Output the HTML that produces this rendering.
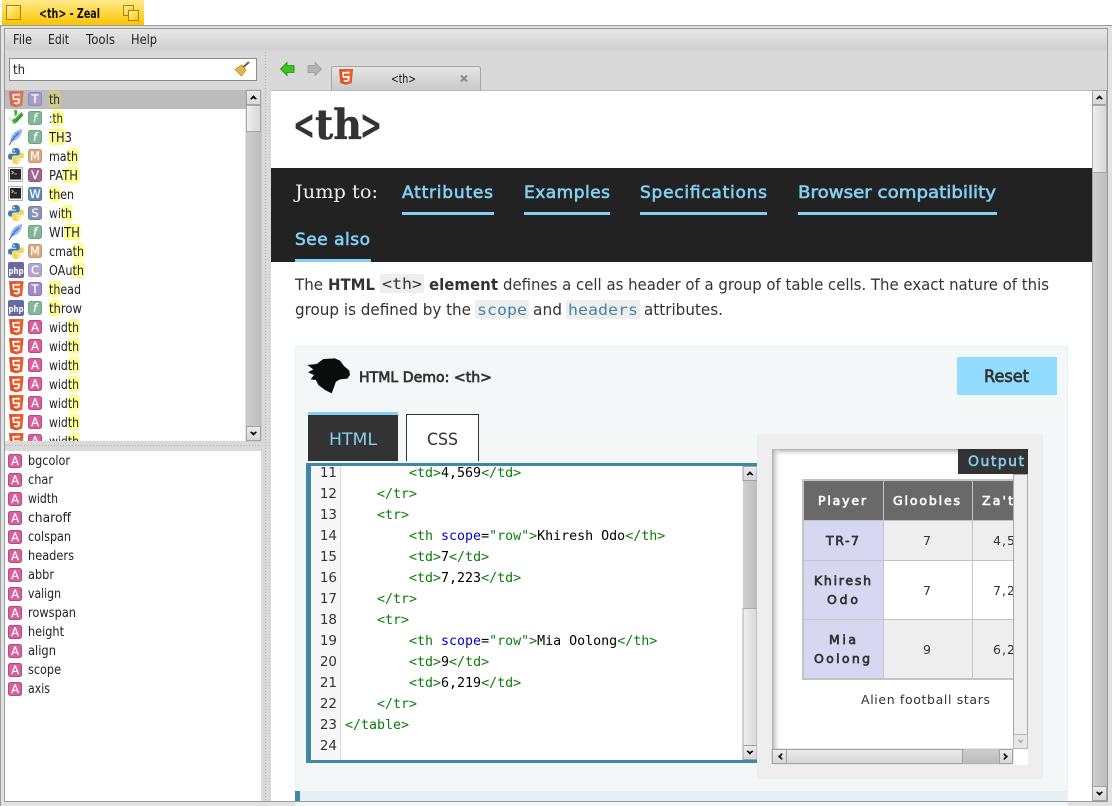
<!DOCTYPE html>
<html lang="en"><head><meta charset="utf-8"><title>&lt;th&gt; - Zeal</title>
<style>
html,body{margin:0;padding:0;background:#fff;overflow:hidden}
svg{display:block;font-family:"DejaVu Sans",sans-serif}
.ui{font-size:13.3px;fill:#222}
.b{font-size:15.6px;fill:#333}
.m{font-family:"DejaVu Sans Mono",monospace;font-size:13.3px;fill:#000;white-space:pre}
.g{fill:#0a7d0a}.u{fill:#0000d0}
.n{font-size:13.5px;fill:#333;text-anchor:end}
.l{font-size:17px;fill:#83d0f2;stroke:#83d0f2;stroke-width:.6px}
.t{font-size:12.5px;fill:#333}
.tb{font-size:12.5px;fill:#333;stroke:#333;stroke-width:.7px}
.tw{font-size:12.5px;fill:#fff;stroke:#fff;stroke-width:.6px}
.bd{font-size:11.5px;fill:#fff;text-anchor:middle;stroke:#fff;stroke-width:.15px}
.h1{font-family:"DejaVu Serif",serif;font-weight:bold;font-size:41px;fill:#333;stroke:#333;stroke-width:.4px}
</style></head><body>
<svg width="1112" height="806" viewBox="0 0 1112 806" xmlns="http://www.w3.org/2000/svg">
<defs>
<linearGradient id="ty" x1="0" y1="0" x2="0" y2="1"><stop offset="0" stop-color="#ffea8c"/><stop offset="1" stop-color="#fcc400"/></linearGradient>
<linearGradient id="tbox" x1="0" y1="0" x2="1" y2="1"><stop offset="0" stop-color="#fff3b0"/><stop offset="1" stop-color="#fcc400"/></linearGradient>
<linearGradient id="mn" x1="0" y1="0" x2="0" y2="1"><stop offset="0" stop-color="#e8e8e8"/><stop offset="1" stop-color="#cfcfcf"/></linearGradient>
<linearGradient id="tabg" x1="0" y1="0" x2="0" y2="1"><stop offset="0" stop-color="#e6e6e6"/><stop offset="1" stop-color="#c9c9c9"/></linearGradient>
<linearGradient id="th" x1="0" y1="0" x2="1" y2="0"><stop offset="0" stop-color="#f0f0f0"/><stop offset="1" stop-color="#d6d6d6"/></linearGradient>
<linearGradient id="tr" x1="0" y1="0" x2="1" y2="0"><stop offset="0" stop-color="#cfcfcf"/><stop offset="1" stop-color="#bdbdbd"/></linearGradient>
<linearGradient id="thh" x1="0" y1="0" x2="0" y2="1"><stop offset="0" stop-color="#ececec"/><stop offset="1" stop-color="#d6d6d6"/></linearGradient>
<linearGradient id="trh" x1="0" y1="0" x2="0" y2="1"><stop offset="0" stop-color="#cfcfcf"/><stop offset="1" stop-color="#b9b9b9"/></linearGradient>
<linearGradient id="shL" x1="0" y1="0" x2="1" y2="0"><stop offset="0" stop-color="#aaa"/><stop offset="1" stop-color="#fff" stop-opacity="0"/></linearGradient>
<linearGradient id="shT" x1="0" y1="0" x2="0" y2="1"><stop offset="0" stop-color="#aaa"/><stop offset="1" stop-color="#fff" stop-opacity="0"/></linearGradient>
<symbol id="h5" viewBox="0 0 16 18" overflow="visible">
<path d="M0 0H16L14.5 16 8 18 1.5 16Z" fill="#e44d26"/><path d="M8 1.3H14.6L13.4 15.2 8 16.7Z" fill="#f16529"/>
<path d="M12 4H4.6L5.1 9H11.2L10.7 12.9 8 13.8 5.4 12.9" fill="none" stroke="#fff" stroke-width="1.9"/>
</symbol>
<symbol id="py" viewBox="0 0 16 16" overflow="visible">
<path d="M8 0C4.5 0 4.2 1.5 4.2 3V4.8H8.2V5.6H2.5C1 5.6 0 6.8 0 8.6 0 10.4 1 11.6 2.5 11.6H4V9.6C4 8.4 5 7.6 6.2 7.6H10C11 7.6 11.8 6.8 11.8 5.8V3C11.8 1.2 10.2 0 8 0Z" fill="#3d7ab0"/>
<path d="M8 16C11.5 16 11.8 14.5 11.8 13V11.2H7.8V10.4H13.5C15 10.4 16 9.2 16 7.4 16 5.6 15 4.4 13.5 4.4H12V6.4C12 7.6 11 8.4 9.8 8.4H6C5 8.4 4.2 9.2 4.2 10.2V13C4.2 14.8 5.8 16 8 16Z" fill="#fbd34e"/>
<circle cx="6" cy="2.5" r=".9" fill="#fff"/><circle cx="10" cy="13.5" r=".9" fill="#fff"/>
</symbol>
<symbol id="tm" viewBox="0 0 16 16" overflow="visible">
<rect x=".5" y=".5" width="14" height="14" fill="#f2f2f2" stroke="#b5b5b5"/>
<rect x="2" y="2" width="11" height="10.5" fill="#252525"/>
<path d="M3.5 4L5.5 5.5 3.5 7M6 7H9" fill="none" stroke="#ddd" stroke-width=".8"/>
</symbol>
<symbol id="fe" viewBox="0 0 16 16" overflow="visible">
<path d="M14 0C8 1 3 6 2.2 12 4 13 9 11.5 12 7 13.8 4.5 14.4 2 14 0Z" fill="#8fbcf2"/>
<path d="M11 3.5C8 6 5 9.500 1.200 16" fill="none" stroke="#3a52c8" stroke-width="1"/>
<path d="M4.500 6.500L7 9M7 3.500L10 7" fill="none" stroke="#5a86dc" stroke-width=".7"/>
</symbol>
<symbol id="vm" viewBox="0 0 16 16" overflow="visible">
<path d="M1 6L5 10 3.500 12 .5 9Z" fill="#dfe8dc"/>
<path d="M6 0L9 0 9 6 13.500 2 15.500 5 8 13 5.500 14 4 10 7 8Z" fill="#4fae3e"/>
<path d="M6 7L12 2 11.500 4 7 8.500Z" fill="#ececec"/>
<path d="M7 10L14.500 4 15 5.500 8 13Z" fill="#2f9a2a"/>
</symbol>
<symbol id="up" viewBox="0 0 15 15" overflow="visible"><rect x=".5" y=".5" width="14" height="14" fill="url(#thh)" stroke="#a2a2a2"/><path d="M4 9L7.500 5.200 11 9 9.500 9.500 7.500 8 5.500 9.500Z" fill="#000"/></symbol>
<symbol id="dn" viewBox="0 0 15 15" overflow="visible"><rect x=".5" y=".5" width="14" height="14" fill="url(#thh)" stroke="#a2a2a2"/><path d="M4 6L7.500 9.800 11 6 9.500 5.500 7.500 7 5.500 5.500Z" fill="#000"/></symbol>
<symbol id="bA" viewBox="0 0 14 14" overflow="visible"><rect x=".5" y=".5" width="13" height="13" rx="2" fill="#d95f9e" stroke="#b84a83"/></symbol>
<clipPath id="tc"><rect x="772" y="449" width="241" height="300"/></clipPath>
<clipPath id="lc"><rect x="5" y="90" width="241" height="351"/></clipPath>
</defs>

<!-- window chrome -->
<rect x="0" y="25" width="1112" height="781" fill="#e2e2e2"/>
<path d="M0 25.500H1112M.5 25V806" stroke="#9a9a9a" fill="none"/>
<rect x="4.500" y="28.500" width="1103" height="773" fill="#d9d9d9" stroke="#9a9a9a"/>
<rect x="5" y="29" width="1102" height="21" fill="url(#mn)"/>

<!-- title tab -->
<rect x="2" y="0" width="142" height="25" fill="url(#ty)"/>
<rect x="6.500" y="5.500" width="14" height="14" fill="url(#tbox)" stroke="#a88600"/>
<rect x="123.500" y="5.500" width="10" height="10" fill="url(#tbox)" stroke="#a88600"/>
<rect x="128.500" y="10.500" width="10" height="10" fill="url(#tbox)" stroke="#a88600"/>
<text x="39" y="18" font-size="13" font-weight="bold" fill="#111" textLength="61" lengthAdjust="spacingAndGlyphs">&lt;th&gt; - Zeal</text>

<!-- menu -->
<text class="ui" x="13" y="44" textLength="19" lengthAdjust="spacingAndGlyphs">File</text>
<text class="ui" x="48" y="44" textLength="21" lengthAdjust="spacingAndGlyphs">Edit</text>
<text class="ui" x="86" y="44" textLength="29" lengthAdjust="spacingAndGlyphs">Tools</text>
<text class="ui" x="131" y="44" textLength="26" lengthAdjust="spacingAndGlyphs">Help</text>

<!-- search -->
<rect x="9.500" y="58.500" width="247" height="22" fill="#fff" stroke="#8c8c8c"/>
<text class="ui" x="13" y="74" textLength="12" lengthAdjust="spacingAndGlyphs" fill="#222">th</text>
<path d="M235 69.500L241.500 65 246 70 241.500 76Z" fill="#eab545" stroke="#a87a20" stroke-width=".6"/>
<path d="M243.500 67L249 62" stroke="#8a5a24" stroke-width="2"/>

<!-- splitter dots -->
<path d="M265.500 52V801" stroke="#aaa" stroke-dasharray="1 2" fill="none"/>
<path d="M6 445.500H260" stroke="#aaa" stroke-dasharray="1 2" fill="none"/>

<!-- results list -->
<rect x="5" y="90" width="241" height="351" fill="#fff"/>
<rect x="5" y="90" width="241" height="19" fill="#bcbcbc"/>
<g clip-path="url(#lc)">
<g fill="#ffff9e" stroke="#ffff66">
<rect x="49.500" y="91.500" width="10.500" height="15" rx="3" fill="#c9c998" stroke="#dcdc50"/>
<rect x="52.500" y="110.500" width="10.500" height="15" rx="3"/>
<rect x="49.500" y="129.500" width="15.500" height="15" rx="3"/>
<rect x="67.500" y="148.500" width="10.500" height="15" rx="3"/>
<rect x="63.500" y="167.500" width="15.500" height="15" rx="3"/>
<rect x="49.500" y="186.500" width="10.500" height="15" rx="3"/>
<rect x="61.500" y="205.500" width="10.500" height="15" rx="3"/>
<rect x="64.500" y="224.500" width="15.500" height="15" rx="3"/>
<rect x="73.500" y="243.500" width="10.500" height="15" rx="3"/>
<rect x="73.500" y="262.500" width="10.500" height="15" rx="3"/>
<rect x="49.500" y="281.500" width="10.500" height="15" rx="3"/>
<rect x="49.500" y="300.500" width="10.500" height="15" rx="3"/>
<rect x="68.500" y="319.500" width="10.500" height="15" rx="3"/>
<rect x="68.500" y="338.500" width="10.500" height="15" rx="3"/>
<rect x="68.500" y="357.500" width="10.500" height="15" rx="3"/>
<rect x="68.500" y="376.500" width="10.500" height="15" rx="3"/>
<rect x="68.500" y="395.500" width="10.500" height="15" rx="3"/>
<rect x="68.500" y="414.500" width="10.500" height="15" rx="3"/>
<rect x="68.500" y="433.500" width="10.500" height="15" rx="3"/>
</g>
<g opacity=".72"><use href="#h5" x="9" y="91" width="14.500" height="16.500"/></g>
<use href="#vm" x="8" y="110" width="16" height="16"/>
<use href="#fe" x="8" y="129" width="16" height="16"/>
<use href="#py" x="8" y="148" width="16" height="16"/>
<use href="#tm" x="8" y="167" width="16" height="16"/>
<use href="#tm" x="8" y="186" width="16" height="16"/>
<use href="#py" x="8" y="205" width="16" height="16"/>
<use href="#fe" x="8" y="224" width="16" height="16"/>
<use href="#py" x="8" y="243" width="16" height="16"/>
<rect x="8" y="262" width="16" height="16" rx="2" fill="#6a699f"/><text x="8.500" y="274" font-size="9" font-weight="bold" fill="#fff" textLength="15" lengthAdjust="spacingAndGlyphs">php</text>
<use href="#h5" x="9" y="281" width="14.500" height="16.500"/>
<rect x="8" y="300" width="16" height="16" rx="2" fill="#6a699f"/><text x="8.500" y="312" font-size="9" font-weight="bold" fill="#fff" textLength="15" lengthAdjust="spacingAndGlyphs">php</text>
<use href="#h5" x="9" y="319" width="14.500" height="16.500"/>
<use href="#h5" x="9" y="338" width="14.500" height="16.500"/>
<use href="#h5" x="9" y="357" width="14.500" height="16.500"/>
<use href="#h5" x="9" y="376" width="14.500" height="16.500"/>
<use href="#h5" x="9" y="395" width="14.500" height="16.500"/>
<use href="#h5" x="9" y="414" width="14.500" height="16.500"/>
<use href="#h5" x="9" y="433" width="14.500" height="16.500"/>

<rect x="28.500" y="92.500" width="13" height="13" rx="2" fill="#a99ccb" stroke="#9485bd"/><text class="bd" x="35" y="103">T</text>
<rect x="28.500" y="111.500" width="13" height="13" rx="2" fill="#83b79c" stroke="#6fa488"/><text class="bd" x="35" y="122" font-style="italic">f</text>
<rect x="28.500" y="130.500" width="13" height="13" rx="2" fill="#83b79c" stroke="#6fa488"/><text class="bd" x="35" y="141" font-style="italic">f</text>
<rect x="28.500" y="149.500" width="13" height="13" rx="2" fill="#dba97f" stroke="#c9966b"/><text class="bd" x="35" y="160">M</text>
<rect x="28.500" y="168.500" width="13" height="13" rx="2" fill="#a46690" stroke="#8f5379"/><text class="bd" x="35" y="179">V</text>
<rect x="28.500" y="187.500" width="13" height="13" rx="2" fill="#6388bf" stroke="#5073a9"/><text class="bd" x="35" y="198">W</text>
<rect x="28.500" y="206.500" width="13" height="13" rx="2" fill="#8893b8" stroke="#7580a6"/><text class="bd" x="35" y="217">S</text>
<rect x="28.500" y="225.500" width="13" height="13" rx="2" fill="#83b79c" stroke="#6fa488"/><text class="bd" x="35" y="236" font-style="italic">f</text>
<rect x="28.500" y="244.500" width="13" height="13" rx="2" fill="#dba97f" stroke="#c9966b"/><text class="bd" x="35" y="255">M</text>
<rect x="28.500" y="263.500" width="13" height="13" rx="2" fill="#b5a6d0" stroke="#a292bf"/><text class="bd" x="35" y="274">C</text>
<rect x="28.500" y="282.500" width="13" height="13" rx="2" fill="#9d8cc5" stroke="#8a78b4"/><text class="bd" x="35" y="293">T</text>
<rect x="28.500" y="301.500" width="13" height="13" rx="2" fill="#83b79c" stroke="#6fa488"/><text class="bd" x="35" y="312" font-style="italic">f</text>
<use href="#bA" x="28" y="320" width="14" height="14"/><text class="bd" x="35" y="331">A</text>
<use href="#bA" x="28" y="339" width="14" height="14"/><text class="bd" x="35" y="350">A</text>
<use href="#bA" x="28" y="358" width="14" height="14"/><text class="bd" x="35" y="369">A</text>
<use href="#bA" x="28" y="377" width="14" height="14"/><text class="bd" x="35" y="388">A</text>
<use href="#bA" x="28" y="396" width="14" height="14"/><text class="bd" x="35" y="407">A</text>
<use href="#bA" x="28" y="415" width="14" height="14"/><text class="bd" x="35" y="426">A</text>
<use href="#bA" x="28" y="434" width="14" height="14"/><text class="bd" x="35" y="445">A</text>

<text class="ui" x="49" y="104" textLength="11" lengthAdjust="spacingAndGlyphs">th</text>
<text class="ui" x="49" y="123" textLength="14" lengthAdjust="spacingAndGlyphs">:th</text>
<text class="ui" x="49" y="142" textLength="23" lengthAdjust="spacingAndGlyphs">TH3</text>
<text class="ui" x="49" y="161" textLength="29" lengthAdjust="spacingAndGlyphs">math</text>
<text class="ui" x="49" y="180" textLength="29" lengthAdjust="spacingAndGlyphs">PATH</text>
<text class="ui" x="49" y="199" textLength="25" lengthAdjust="spacingAndGlyphs">then</text>
<text class="ui" x="49" y="218" textLength="23" lengthAdjust="spacingAndGlyphs">with</text>
<text class="ui" x="49" y="237" textLength="31" lengthAdjust="spacingAndGlyphs">WITH</text>
<text class="ui" x="49" y="256" textLength="35" lengthAdjust="spacingAndGlyphs">cmath</text>
<text class="ui" x="49" y="275" textLength="35" lengthAdjust="spacingAndGlyphs">OAuth</text>
<text class="ui" x="49" y="294" textLength="32" lengthAdjust="spacingAndGlyphs">thead</text>
<text class="ui" x="49" y="313" textLength="33" lengthAdjust="spacingAndGlyphs">throw</text>
<text class="ui" x="49" y="332" textLength="30" lengthAdjust="spacingAndGlyphs">width</text>
<text class="ui" x="49" y="351" textLength="30" lengthAdjust="spacingAndGlyphs">width</text>
<text class="ui" x="49" y="370" textLength="30" lengthAdjust="spacingAndGlyphs">width</text>
<text class="ui" x="49" y="389" textLength="30" lengthAdjust="spacingAndGlyphs">width</text>
<text class="ui" x="49" y="408" textLength="30" lengthAdjust="spacingAndGlyphs">width</text>
<text class="ui" x="49" y="427" textLength="30" lengthAdjust="spacingAndGlyphs">width</text>
<text class="ui" x="49" y="446" textLength="30" lengthAdjust="spacingAndGlyphs">width</text>
</g>
<!-- list scrollbar -->
<rect x="246" y="90" width="15" height="351" fill="url(#tr)" stroke="#a2a2a2" stroke-width=".5"/>
<use href="#up" x="246" y="90" width="15" height="15"/>
<rect x="246.500" y="105.500" width="14" height="26" fill="url(#th)" stroke="#a8a8a8"/>
<use href="#dn" x="246" y="426" width="15" height="15"/>

<!-- members list -->
<rect x="5" y="451" width="256" height="350" fill="#fff"/>
<use href="#bA" x="8" y="454" width="14" height="14"/><text class="bd" x="15" y="465">A</text><text class="ui" x="28" y="465" textLength="42" lengthAdjust="spacingAndGlyphs">bgcolor</text>
<use href="#bA" x="8" y="473" width="14" height="14"/><text class="bd" x="15" y="484">A</text><text class="ui" x="28" y="484" textLength="25" lengthAdjust="spacingAndGlyphs">char</text>
<use href="#bA" x="8" y="492" width="14" height="14"/><text class="bd" x="15" y="503">A</text><text class="ui" x="28" y="503" textLength="30" lengthAdjust="spacingAndGlyphs">width</text>
<use href="#bA" x="8" y="511" width="14" height="14"/><text class="bd" x="15" y="522">A</text><text class="ui" x="28" y="522" textLength="43" lengthAdjust="spacingAndGlyphs">charoff</text>
<use href="#bA" x="8" y="530" width="14" height="14"/><text class="bd" x="15" y="541">A</text><text class="ui" x="28" y="541" textLength="43" lengthAdjust="spacingAndGlyphs">colspan</text>
<use href="#bA" x="8" y="549" width="14" height="14"/><text class="bd" x="15" y="560">A</text><text class="ui" x="28" y="560" textLength="46" lengthAdjust="spacingAndGlyphs">headers</text>
<use href="#bA" x="8" y="568" width="14" height="14"/><text class="bd" x="15" y="579">A</text><text class="ui" x="28" y="579" textLength="26" lengthAdjust="spacingAndGlyphs">abbr</text>
<use href="#bA" x="8" y="587" width="14" height="14"/><text class="bd" x="15" y="598">A</text><text class="ui" x="28" y="598" textLength="33" lengthAdjust="spacingAndGlyphs">valign</text>
<use href="#bA" x="8" y="606" width="14" height="14"/><text class="bd" x="15" y="617">A</text><text class="ui" x="28" y="617" textLength="48" lengthAdjust="spacingAndGlyphs">rowspan</text>
<use href="#bA" x="8" y="625" width="14" height="14"/><text class="bd" x="15" y="636">A</text><text class="ui" x="28" y="636" textLength="36" lengthAdjust="spacingAndGlyphs">height</text>
<use href="#bA" x="8" y="644" width="14" height="14"/><text class="bd" x="15" y="655">A</text><text class="ui" x="28" y="655" textLength="28" lengthAdjust="spacingAndGlyphs">align</text>
<use href="#bA" x="8" y="663" width="14" height="14"/><text class="bd" x="15" y="674">A</text><text class="ui" x="28" y="674" textLength="33" lengthAdjust="spacingAndGlyphs">scope</text>
<use href="#bA" x="8" y="682" width="14" height="14"/><text class="bd" x="15" y="693">A</text><text class="ui" x="28" y="693" textLength="22" lengthAdjust="spacingAndGlyphs">axis</text>

<!-- nav arrows and tab -->
<path d="M280.500 69L287 62.500V65.500H294V72.500H287V75.500Z" fill="#3fc41f" stroke="#1f8a10" stroke-width=".8"/>
<path d="M321.500 69L315 62.500V65.500H308V72.500H315V75.500Z" fill="#b4b4b4" stroke="#999" stroke-width=".8"/>
<path d="M331.500 90V69Q331.500 66.500 334 66.500H478Q480.500 66.500 480.500 69V90" fill="url(#tabg)" stroke="#a5a5a5"/>
<use href="#h5" x="339" y="69" width="14" height="16"/>
<text x="391" y="83" font-size="12.500" fill="#111" textLength="25" lengthAdjust="spacingAndGlyphs">&lt;th&gt;</text>
<path d="M461 75.500L467 81.500M467 75.500L461 81.500" stroke="#8a8a8a" stroke-width="2"/>

<!-- main content -->
<rect x="271" y="90" width="821" height="711" fill="#fff"/>
<path d="M271 90.500H1092" stroke="#bbb"/>
<text class="h1" x="293" y="139" textLength="22" lengthAdjust="spacingAndGlyphs">&lt;</text>
<text class="h1" x="315" y="139" textLength="47" lengthAdjust="spacingAndGlyphs">th</text>
<text class="h1" x="360" y="139" textLength="22" lengthAdjust="spacingAndGlyphs">&gt;</text>

<rect x="271" y="168" width="821" height="94" fill="#222"/>
<text x="295" y="198" font-family="'DejaVu Serif',serif" font-size="19" fill="#eee" textLength="83" lengthAdjust="spacingAndGlyphs">Jump to:</text>
<text class="l" x="402" y="198" textLength="91" lengthAdjust="spacing">Attributes</text><rect x="402" y="212" width="92" height="3" fill="#83d0f2"/>
<text class="l" x="524" y="198" textLength="86" lengthAdjust="spacing">Examples</text><rect x="524" y="212" width="86" height="3" fill="#83d0f2"/>
<text class="l" x="640" y="198" textLength="127" lengthAdjust="spacing">Specifications</text><rect x="640" y="212" width="127" height="3" fill="#83d0f2"/>
<text class="l" x="798" y="198" textLength="198" lengthAdjust="spacingAndGlyphs">Browser compatibility</text><rect x="798" y="212" width="199" height="3" fill="#83d0f2"/>
<text class="l" x="295" y="245" textLength="75" lengthAdjust="spacing">See also</text><rect x="295" y="259" width="76" height="3" fill="#83d0f2"/>

<!-- intro -->
<text class="b" x="295" y="290" textLength="28" lengthAdjust="spacingAndGlyphs">The</text>
<text class="b" x="328" y="290" font-weight="bold" textLength="47" lengthAdjust="spacingAndGlyphs">HTML</text>
<rect x="380" y="274" width="44" height="19" rx="2" fill="#eee"/>
<text x="382" y="289" font-family="'DejaVu Sans Mono',monospace" font-size="15.500" fill="#333" textLength="40" lengthAdjust="spacingAndGlyphs">&lt;th&gt;</text>
<text class="b" x="429" y="290" font-weight="bold" textLength="69" lengthAdjust="spacingAndGlyphs">element</text>
<text class="b" x="503" y="290" textLength="546" lengthAdjust="spacingAndGlyphs">defines a cell as header of a group of table cells. The exact nature of this</text>
<text class="b" x="295" y="315" textLength="176" lengthAdjust="spacingAndGlyphs">group is defined by the</text>
<rect x="475" y="300" width="54" height="19" rx="2" fill="#eee"/>
<text x="477" y="315" font-family="'DejaVu Sans Mono',monospace" font-size="15.500" fill="#3f87a6" textLength="50" lengthAdjust="spacingAndGlyphs">scope</text>
<text class="b" x="533" y="315" textLength="29" lengthAdjust="spacingAndGlyphs">and</text>
<rect x="566" y="300" width="74" height="19" rx="2" fill="#eee"/>
<text x="568" y="315" font-family="'DejaVu Sans Mono',monospace" font-size="15.500" fill="#3f87a6" textLength="70" lengthAdjust="spacingAndGlyphs">headers</text>
<text class="b" x="644" y="315" textLength="79" lengthAdjust="spacingAndGlyphs">attributes.</text>

<!-- demo panel -->
<rect x="295.500" y="346.500" width="772" height="460" fill="#f4f7f8" stroke="#eaf2f4"/>
<rect x="295" y="791" width="773" height="10" fill="#e4f0f5"/>
<rect x="295" y="791" width="5" height="10" fill="#3f87a6"/>
<g transform="translate(290 340) scale(.3333)"><path d="M100 57L135 55 150 62 162 78 178 92 180 105 172 116 150 118 138 125 125 160 105 150 85 135 78 120 62 118 72 105 54 97 70 88 52 75 80 72Z" fill="#0b0d0c"/></g>
<text x="359" y="382" font-size="14" fill="#333" stroke="#333" stroke-width=".7" textLength="133" lengthAdjust="spacingAndGlyphs">HTML Demo: &lt;th&gt;</text>
<rect x="957" y="357" width="100" height="38" fill="#92dcff"/>
<text x="984" y="382" font-size="16.500" fill="#333" stroke="#333" stroke-width=".7" textLength="45" lengthAdjust="spacingAndGlyphs">Reset</text>

<rect x="308" y="412" width="90" height="49" fill="#333"/>
<rect x="308" y="412" width="90" height="3" fill="#83d0f2"/>
<text x="329" y="445" font-size="17" fill="#83d0f2" textLength="48" lengthAdjust="spacingAndGlyphs">HTML</text>
<path d="M406.500 461V414.500H478.500V461" fill="#fff" stroke="#333"/>
<text x="427" y="445" font-size="17" fill="#333" textLength="31" lengthAdjust="spacingAndGlyphs">CSS</text>

<!-- editor -->
<rect x="306" y="463" width="451" height="300" fill="#3f87a6"/>
<rect x="311" y="466" width="446" height="294" fill="#fff"/>
<rect x="311" y="466" width="29" height="294" fill="#f7f7f7"/>
<path d="M340.500 466V760" stroke="#ddd"/>
<text class="n" x="337" y="477">11</text>
<text class="n" x="337" y="498">12</text>
<text class="n" x="337" y="519">13</text>
<text class="n" x="337" y="540">14</text>
<text class="n" x="337" y="561">15</text>
<text class="n" x="337" y="582">16</text>
<text class="n" x="337" y="603">17</text>
<text class="n" x="337" y="624">18</text>
<text class="n" x="337" y="645">19</text>
<text class="n" x="337" y="666">20</text>
<text class="n" x="337" y="687">21</text>
<text class="n" x="337" y="708">22</text>
<text class="n" x="337" y="729">23</text>
<text class="n" x="337" y="750">24</text>
<text class="m" x="409" y="477"><tspan class="g">&lt;td&gt;</tspan>4,569<tspan class="g">&lt;/td&gt;</tspan></text>
<text class="m g" x="377" y="498">&lt;/tr&gt;</text>
<text class="m g" x="377" y="519">&lt;tr&gt;</text>
<text class="m" x="409" y="540"><tspan class="g">&lt;th </tspan><tspan class="u">scope</tspan>=<tspan class="g">"row"&gt;</tspan>Khiresh Odo<tspan class="g">&lt;/th&gt;</tspan></text>
<text class="m" x="409" y="561"><tspan class="g">&lt;td&gt;</tspan>7<tspan class="g">&lt;/td&gt;</tspan></text>
<text class="m" x="409" y="582"><tspan class="g">&lt;td&gt;</tspan>7,223<tspan class="g">&lt;/td&gt;</tspan></text>
<text class="m g" x="377" y="603">&lt;/tr&gt;</text>
<text class="m g" x="377" y="624">&lt;tr&gt;</text>
<text class="m" x="409" y="645"><tspan class="g">&lt;th </tspan><tspan class="u">scope</tspan>=<tspan class="g">"row"&gt;</tspan>Mia Oolong<tspan class="g">&lt;/th&gt;</tspan></text>
<text class="m" x="409" y="666"><tspan class="g">&lt;td&gt;</tspan>9<tspan class="g">&lt;/td&gt;</tspan></text>
<text class="m" x="409" y="687"><tspan class="g">&lt;td&gt;</tspan>6,219<tspan class="g">&lt;/td&gt;</tspan></text>
<text class="m g" x="377" y="708">&lt;/tr&gt;</text>
<text class="m g" x="345" y="729">&lt;/table&gt;</text>
<rect x="743" y="466" width="14" height="294" fill="url(#tr)"/>
<use href="#up" x="742.500" y="466" width="15" height="15"/>
<rect x="743" y="608.500" width="14" height="137" fill="url(#th)" stroke="#aaa"/>
<use href="#dn" x="742.500" y="745" width="15" height="15"/>

<!-- output -->
<rect x="757" y="434" width="286" height="345" fill="#eee"/>
<rect x="772" y="449" width="256" height="316" fill="#fff"/>
<rect x="772" y="449" width="241" height="8" fill="url(#shT)"/>
<rect x="772" y="449" width="9" height="300" fill="url(#shL)"/>
<g clip-path="url(#tc)">
<rect x="802" y="479" width="220" height="201" fill="#c4c4c4"/>
<rect x="804" y="481" width="79" height="39" fill="#696969"/>
<rect x="884" y="481" width="88" height="39" fill="#696969"/>
<rect x="973" y="481" width="50" height="39" fill="#696969"/>
<rect x="804" y="521" width="79" height="39" fill="#d7d7f2"/>
<rect x="884" y="521" width="88" height="39" fill="#eee"/>
<rect x="973" y="521" width="50" height="39" fill="#eee"/>
<rect x="804" y="561" width="79" height="58" fill="#d7d7f2"/>
<rect x="884" y="561" width="88" height="58" fill="#fff"/>
<rect x="973" y="561" width="50" height="58" fill="#fff"/>
<rect x="804" y="620" width="79" height="58" fill="#d7d7f2"/>
<rect x="884" y="620" width="88" height="58" fill="#eee"/>
<rect x="973" y="620" width="50" height="58" fill="#eee"/>
<text class="tw" x="818" y="505" textLength="48" lengthAdjust="spacing">Player</text>
<text class="tw" x="893" y="505" textLength="67" lengthAdjust="spacing">Gloobles</text>
<text class="tw" x="982" y="505" textLength="60" lengthAdjust="spacing">Za'taak</text>
<text class="tb" x="826" y="545" textLength="33" lengthAdjust="spacing">TR-7</text>
<text class="t" x="923" y="545" textLength="8" lengthAdjust="spacing">7</text>
<text class="t" x="993" y="545" textLength="40" lengthAdjust="spacing">4,569</text>
<text class="tb" x="814" y="585" textLength="57" lengthAdjust="spacing">Khiresh</text>
<text class="tb" x="827" y="604" textLength="31" lengthAdjust="spacing">Odo</text>
<text class="t" x="923" y="595" textLength="8" lengthAdjust="spacing">7</text>
<text class="t" x="993" y="595" textLength="40" lengthAdjust="spacing">7,223</text>
<text class="tb" x="829" y="644" textLength="27" lengthAdjust="spacing">Mia</text>
<text class="tb" x="814" y="663" textLength="56" lengthAdjust="spacing">Oolong</text>
<text class="t" x="923" y="654" textLength="8" lengthAdjust="spacing">9</text>
<text class="t" x="993" y="654" textLength="40" lengthAdjust="spacing">6,219</text>
<text class="t" x="861" y="704" textLength="129" lengthAdjust="spacing">Alien football stars</text>
</g>
<rect x="1013.500" y="474.500" width="14" height="274" fill="#eee" stroke="#a8a8a8"/>
<rect x="1013.500" y="734.500" width="14" height="14" fill="#e8e8e8" stroke="#b5b5b5"/>
<path d="M1017.500 740L1020.500 743.500 1023.500 740 1022 739.500 1020.500 741 1019 739.500Z" fill="#aaa"/>
<rect x="772" y="749" width="241" height="15" fill="url(#trh)" stroke="#a0a0a0" stroke-width=".5"/>
<rect x="772.500" y="749.500" width="14" height="14" fill="url(#thh)" stroke="#a2a2a2"/>
<path d="M782 753L778 756.500 782 760 782.500 758.500 780.500 756.500 782.500 754.500Z" fill="#000"/>
<rect x="786.500" y="749.500" width="176" height="14" fill="url(#thh)" stroke="#a2a2a2"/>
<rect x="999.500" y="749.500" width="13" height="14" fill="url(#thh)" stroke="#a2a2a2"/>
<path d="M1004 753L1008 756.500 1004 760 1003.500 758.500 1005.500 756.500 1003.500 754.500Z" fill="#000"/>
<rect x="958" y="449" width="70" height="25" fill="#333"/>
<text x="968" y="466" font-size="14" fill="#83d0f2" stroke="#83d0f2" stroke-width=".5" textLength="56" lengthAdjust="spacing">Output</text>

<!-- main scrollbar -->
<rect x="1092" y="90" width="15" height="711" fill="url(#tr)"/>
<path d="M1092.500 90V801" stroke="#a2a2a2"/>
<use href="#up" x="1092" y="90" width="15" height="15"/>
<rect x="1092.500" y="105.500" width="14" height="67" fill="url(#th)" stroke="#a8a8a8"/>
<use href="#dn" x="1092" y="786" width="15" height="15"/>
<path d="M4.500 801.500H1107.500" stroke="#9a9a9a"/>
</svg>
</body></html>
